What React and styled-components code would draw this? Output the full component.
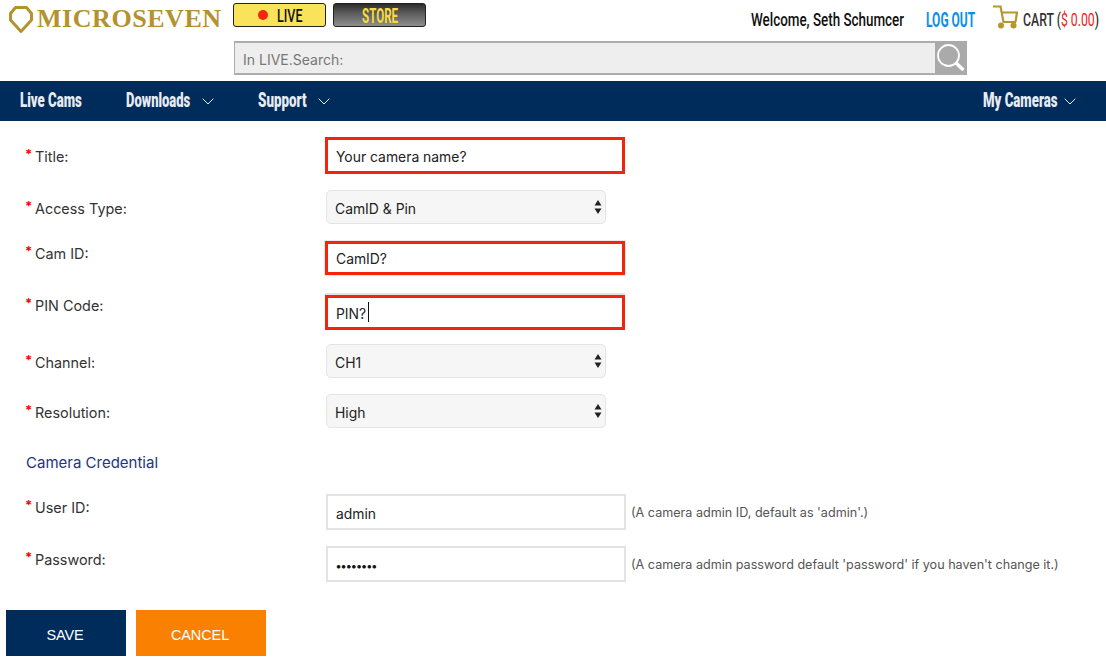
import React from "react";
import styled, { createGlobalStyle } from "styled-components";

const Global = createGlobalStyle`
  html, body { margin: 0; padding: 0; background: #fff; }
  body { font-family: Inter, "Liberation Sans", sans-serif; color: #222; overflow: hidden; }
  * { box-sizing: border-box; }
`;

const Page = styled.div`
  width: 1106px;
  height: 671px;
  overflow: hidden;
`;

const Header = styled.header`
  height: 81px;
  display: grid;
  grid-template-columns: 233px 1fr;
`;

const Logo = styled.div`
  display: flex;
  align-items: flex-start;
  padding: 5px 0 0 8px;
  color: #b2932f;
`;

const LogoText = styled.span`
  font-family: "Liberation Serif", serif;
  font-weight: 700;
  font-size: 26px;
  line-height: 27px;
  letter-spacing: 0.55px;
  margin-left: 3px;
`;

const HeaderMain = styled.div`
  display: flex;
  flex-direction: column;
`;

const TopRow = styled.div`
  display: flex;
  align-items: flex-start;
  height: 41px;
  padding-top: 3px;
`;

const Condensed = styled.span`
  display: inline-block;
  width: ${(p) => p.$w}px;
  margin-left: ${(p) => p.$ml || 0}px;
  white-space: nowrap;
  font-family: "Roboto", sans-serif;
  font-weight: ${(p) => p.$weight || 500};
  font-size: ${(p) => p.$size || 20}px;
  line-height: 22px;
  color: ${(p) => p.$color || "inherit"};
  transform: scaleX(${(p) => p.$sx || 0.65});
  transform-origin: left center;
`;

const Price = styled.span`
  color: #e22;
  font-weight: 400;
`;

const ModeButton = styled.div`
  width: 93px;
  height: 24px;
  border-radius: 3px;
  border: 1px solid #222;
  margin-right: 7px;
  padding-top: 2px;
  display: flex;
  align-items: center;
  justify-content: center;
  gap: 9px;
  background: ${(p) => (p.$dark ? "linear-gradient(#2b2b2b, #555 35%, #8e8e8e)" : "#f9e35b")};
`;

const RecDot = styled.span`
  width: 10px;
  height: 10px;
  border-radius: 50%;
  margin-top: -2px;
  background: #f5260f;
`;

const UserArea = styled.div`
  margin-left: auto;
  display: flex;
  align-items: center;
  height: 33px;
  padding-right: 8px;
`;

const CartLink = styled.div`
  display: flex;
  align-items: center;
  margin-left: 17px;
  gap: 5px;
`;

const CartSvg = styled.svg`
  margin-top: -6px;
`;

const SearchBar = styled.div`
  width: 733px;
  height: 34px;
  margin-left: 1px;
  display: flex;
  background: #eee;
  border: 1px solid #adadad;
  border-width: 2px 0 2px 1px;
`;

const SearchInput = styled.input`
  flex: 1;
  border: 0;
  background: transparent;
  outline: none;
  padding: 2px 8px 0;
  font: 14px Inter, sans-serif;
  color: #666;
  &::placeholder { color: #777; opacity: 1; }
`;

const SearchButton = styled.div`
  width: 32px;
  margin: -2px 0;
  background: #aaa;
  display: flex;
  align-items: center;
  justify-content: center;
`;

const Nav = styled.nav`
  height: 40px;
  background: #002c5c;
  color: #e8ecf2;
  display: flex;
  align-items: center;
  padding: 0 30px 2px 20px;
`;

const NavItem = styled.div`
  display: flex;
  align-items: center;
  gap: ${(p) => p.$gap || 9}px;
  margin-right: ${(p) => p.$mr || 0}px;
  ${(p) => p.$right && "margin-left: auto;"}
`;

const ChevronSvg = styled.svg`
  margin-top: 3px;
`;

const Form = styled.form`
  padding: 16px 0 0 0;
`;

const Row = styled.div`
  display: grid;
  grid-template-columns: 326px auto;
  align-items: start;
  margin-top: ${(p) => p.$top || 0}px;
`;

const Label = styled.label`
  display: block;
  padding: ${(p) => p.$pad}px 0 0 25px;
  font-size: 14.4px;
  line-height: 18px;
  color: #333;
`;

const Req = styled.span`
  display: inline-block;
  width: 10px;
  color: #f00;
  font-size: 13px;
  font-weight: 700;
  line-height: 10px;
  position: relative;
  top: -3px;
`;

const Control = styled.div`
  display: flex;
  align-items: center;
  position: relative;
`;

const Input = styled.input`
  width: 300px;
  height: ${(p) => p.$h || 36}px;
  margin-left: ${(p) => (p.$alert ? -1 : 0)}px;
  border: ${(p) => (p.$alert ? "3px solid #f5230c" : "2px solid #e3e3e3")};
  box-shadow: ${(p) => p.$halo || "none"};
  padding: ${(p) => (p.$alert ? 2 : 3)}px 8px 0;
  font-family: Inter, sans-serif;
  font-size: 13.9px;
  color: #222;
  background: #fff;
  outline: none;
`;

const PasswordInput = styled(Input)`
  padding-top: 5px;
  font-family: "DejaVu Sans", sans-serif;
  font-size: 8.7px;
  -webkit-text-security: square;
  -webkit-text-stroke: 1px #111;
  color: #111;
`;

const Select = styled.select`
  width: 280px;
  height: 34px;
  appearance: none;
  border: 1px solid #e4e4e4;
  border-radius: 5px;
  background: #f6f6f6;
  padding: 4px 8px 0;
  font-family: Inter, sans-serif;
  font-size: 13.9px;
  color: #222;
  outline: none;
`;

const SelectArrows = styled.svg`
  position: absolute;
  left: 268px;
  top: 10px;
  width: 8px;
  height: 14px;
`;

const Caret = styled.span`
  position: absolute;
  left: 42px;
  top: 7px;
  width: 1px;
  height: 20px;
  background: #111;
`;

const Hint = styled.span`
  margin-left: 5px;
  font-size: 12.6px;
  color: #555;
  white-space: nowrap;
`;

const SectionTitle = styled.div`
  margin-top: 24px;
  padding-left: 26px;
  height: 20px;
  font-size: 15px;
  line-height: 21px;
  color: #24357c;
`;

const Actions = styled.div`
  display: flex;
  gap: 10px;
  padding-left: 6px;
  margin-top: 28px;
`;

const ActionButton = styled.button`
  width: ${(p) => p.$w}px;
  height: 46px;
  padding: 3px 8px 0 6px;
  border: 0;
  background: ${(p) => p.$bg};
  color: #fff;
  font-family: "Liberation Sans", Arial, sans-serif;
  font-size: 14.5px;
  letter-spacing: -0.1px;
`;

const Chevron = () => (
  <ChevronSvg width="12" height="7" viewBox="0 0 12 7" fill="none" stroke="#e8ecf2" strokeWidth="1">
    <path d="M0.7 0.7 6 6 11.3 0.7" />
  </ChevronSvg>
);

const LogoMark = () => (
  <svg width="26" height="30" viewBox="0 0 26 30" fill="none" stroke="#b2932f" strokeWidth="3">
    <path d="M7.500 2.500h11l5 6v6.500L13 26.500 2.500 15V8.500z" strokeLinejoin="round" />
  </svg>
);

const CartIcon = () => (
  <CartSvg width="25" height="24" viewBox="0 0 25 24" fill="none" stroke="#b8962e" strokeWidth="2.200">
    <path d="M0 1.500h7.500l3 15.500h12.500" />
    <path d="M8.500 7.500h15.500l-1.500 9.500" />
    <circle cx="8" cy="20.500" r="3" fill="#b8962e" stroke="none" />
    <circle cx="20.500" cy="20.500" r="3" fill="#b8962e" stroke="none" />
  </CartSvg>
);

const SearchIcon = () => (
  <svg width="30" height="30" viewBox="0 0 30 30" fill="none" stroke="#fff">
    <circle cx="12.500" cy="12.500" r="10.500" strokeWidth="1.800" />
    <path d="M20 20l7.500 7" strokeWidth="3.500" />
  </svg>
);

const Field = ({ label, pad, top, children }) => (
  <Row $top={top}>
    <Label $pad={pad}><Req>*</Req>{label}</Label>
    <Control>{children}</Control>
  </Row>
);

const Arrows = () => (
  <SelectArrows viewBox="0 0 8 14" fill="#222">
    <path d="M4 0l3.500 5.500h-7zM4 14L.5 8.500h7z" />
  </SelectArrows>
);

export default function App() {
  return (
    <Page>
      <Global />
      <Header>
        <Logo>
          <LogoMark />
          <LogoText>MICROSEVEN</LogoText>
        </Logo>
        <HeaderMain>
          <TopRow>
            <ModeButton>
              <RecDot />
              <Condensed $w={24} $color="#111" $size={19} $sx={0.66}>LIVE</Condensed>
            </ModeButton>
            <ModeButton $dark>
              <Condensed $w={36} $color="#f7dc3c" $weight={700} $sx={0.58}>STORE</Condensed>
            </ModeButton>
            <UserArea>
              <Condensed $w={154} $color="#111" $size={19} $sx={0.705}>Welcome, Seth Schumcer</Condensed>
              <Condensed $w={50} $ml={21} $color="#0b8fe8" $size={20} $weight={700} $sx={0.6}>LOG OUT</Condensed>
              <CartLink>
                <CartIcon />
                <Condensed $w={75} $color="#333" $size={19} $sx={0.645}>
                  CART (<Price>$ 0.00</Price>)
                </Condensed>
              </CartLink>
            </UserArea>
          </TopRow>
          <SearchBar>
            <SearchInput placeholder="In LIVE.Search:" readOnly />
            <SearchButton><SearchIcon /></SearchButton>
          </SearchBar>
        </HeaderMain>
      </Header>
      <Nav>
        <NavItem $mr={45}><Condensed $w={61} $weight={900} $sx={0.66}>Live Cams</Condensed></NavItem>
        <NavItem $mr={44}><Condensed $w={67} $weight={900} $sx={0.65}>Downloads</Condensed><Chevron /></NavItem>
        <NavItem><Condensed $w={51} $weight={900} $sx={0.67}>Support</Condensed><Chevron /></NavItem>
        <NavItem $right $gap={6}><Condensed $w={75} $weight={900} $sx={0.66}>My Cameras</Condensed><Chevron /></NavItem>
      </Nav>
      <Form>
        <Field label="Title:" pad={11}>
          <Input $alert $h={37} defaultValue="Your camera name?" />
        </Field>
        <Field label="Access Type:" pad={10} top={16}>
          <Select><option>CamID &amp; Pin</option></Select>
          <Arrows />
        </Field>
        <Field label="Cam ID:" pad={4} top={17}>
          <Input $alert $h={34} $halo="0 0 0 1px #e9e9e9" defaultValue="CamID?" />
        </Field>
        <Field label="PIN Code:" pad={2} top={20}>
          <Input $alert $h={35} $halo="0 -2px 0 #e3e3e3" defaultValue="PIN?" />
          <Caret />
        </Field>
        <Field label="Channel:" pad={10} top={14}>
          <Select><option>CH1</option></Select>
          <Arrows />
        </Field>
        <Field label="Resolution:" pad={10} top={16}>
          <Select><option>High</option></Select>
          <Arrows />
        </Field>
        <SectionTitle>Camera Credential</SectionTitle>
        <Field label="User ID:" pad={5} top={22}>
          <Input defaultValue="admin" />
          <Hint>(A camera admin ID, default as 'admin'.)</Hint>
        </Field>
        <Field label="Password:" pad={5} top={16}>
          <PasswordInput type="password" defaultValue="password" />
          <Hint>(A camera admin password default 'password' if you haven't change it.)</Hint>
        </Field>
        <Actions>
          <ActionButton type="button" $w={120} $bg="#002c5c">SAVE</ActionButton>
          <ActionButton type="button" $w={130} $bg="#f98000">CANCEL</ActionButton>
        </Actions>
      </Form>
    </Page>
  );
}
